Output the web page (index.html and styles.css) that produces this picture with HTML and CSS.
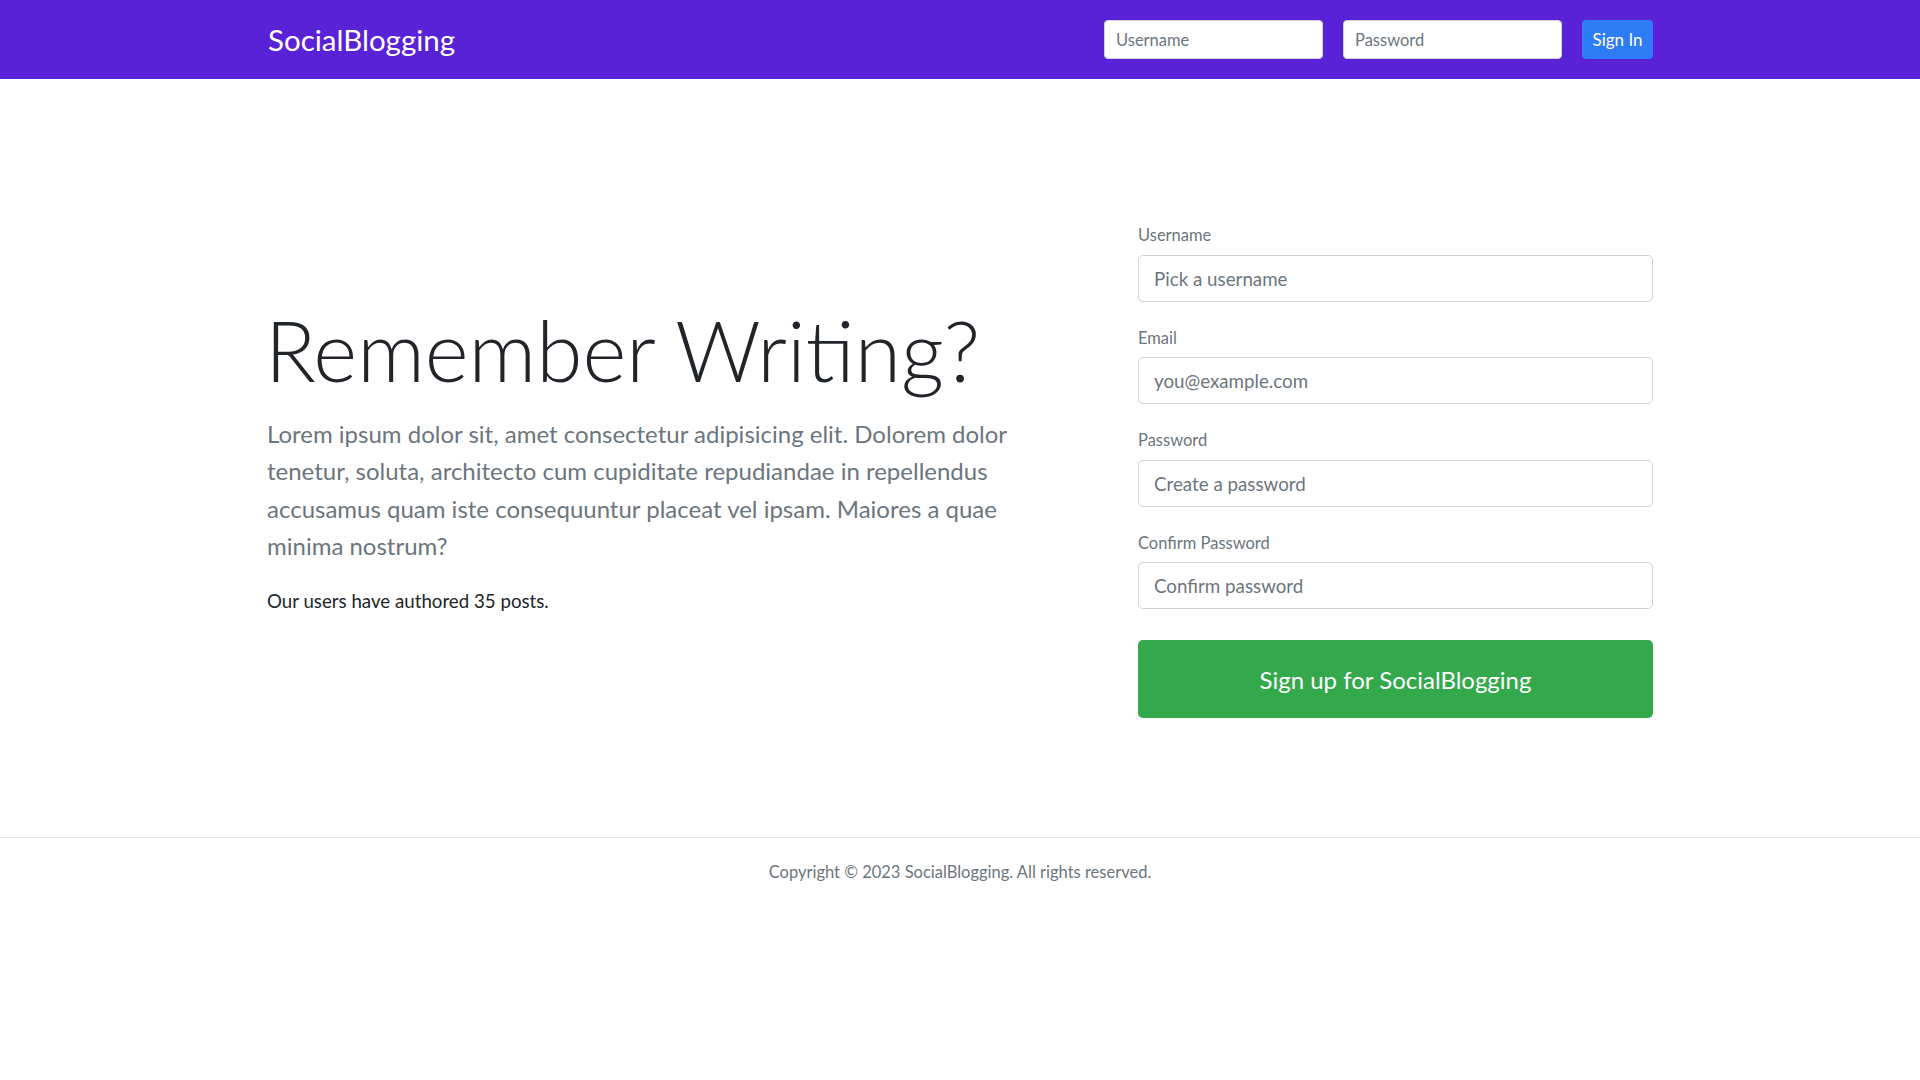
FILE: index.html
```html
<!DOCTYPE html>
<html lang="en">
<head>
<meta charset="utf-8">
<title>SocialBlogging</title>
<link rel="stylesheet" href="styles.css">
</head>
<body>
<header class="topbar">
  <div class="container topbar-inner">
    <a class="brand" href="#">SocialBlogging</a>
    <form class="signin">
      <input class="signin-input" type="text" placeholder="Username">
      <input class="signin-input" type="password" placeholder="Password">
      <button class="btn-signin" type="button">Sign In</button>
    </form>
  </div>
</header>

<main class="main">
  <div class="container hero">
    <div class="intro">
      <h1 class="display">Remember Writing?</h1>
      <p class="lead">Lorem ipsum dolor sit, amet consectetur adipisicing elit. Dolorem dolor tenetur, soluta, architecto cum cupiditate repudiandae in repellendus accusamus quam iste consequuntur placeat vel ipsam. Maiores a quae minima nostrum?</p>
      <p class="stats">Our users have authored 35 posts.</p>
    </div>
    <form class="register">
      <div class="field">
        <label class="field-label" for="u">Username</label>
        <input class="field-input" id="u" type="text" placeholder="Pick a username">
      </div>
      <div class="field">
        <label class="field-label" for="e">Email</label>
        <input class="field-input" id="e" type="text" placeholder="you@example.com">
      </div>
      <div class="field">
        <label class="field-label" for="p">Password</label>
        <input class="field-input" id="p" type="password" placeholder="Create a password">
      </div>
      <div class="field">
        <label class="field-label" for="c">Confirm Password</label>
        <input class="field-input" id="c" type="password" placeholder="Confirm password">
      </div>
      <button class="btn-signup" type="button">Sign up for SocialBlogging</button>
    </form>
  </div>
</main>

<footer class="footer">
  <p class="copyright">Copyright &copy; 2023 SocialBlogging. All rights reserved.</p>
</footer>
</body>
</html>
```

FILE: styles.css
```css
* { box-sizing: border-box; }

html, body {
  margin: 0;
  padding: 0;
}

body {
  font-family: Lato, "Noto Sans", sans-serif;
  color: #212529;
  background: #fff;
  font-size: 18.7px;
}

.container {
  width: 1386px;
  margin: 0 auto;
}

/* Top bar */
.topbar {
  background: #5a22d6;
  height: 79px;
}

.topbar-inner {
  height: 79px;
  display: flex;
  align-items: center;
  justify-content: space-between;
}

.brand {
  color: #fff;
  text-decoration: none;
  font-size: 29.5px;
  font-weight: 400;
  margin-left: 1px;
}

.signin {
  display: flex;
  gap: 20px;
  align-items: center;
}

.signin-input {
  width: 219px;
  height: 39px;
  border: 1px solid #ced4da;
  border-radius: 4px;
  padding: 0 11px;
  font-family: inherit;
  font-size: 16.5px;
  color: #495057;
  background: #fff;
  outline: none;
}

.signin-input::placeholder { color: #6c757d; }

.btn-signin {
  height: 39px;
  width: 71px;
  padding: 0;
  border: none;
  border-radius: 4px;
  background: #2e7bf6;
  color: #fff;
  font-family: inherit;
  font-size: 17px;
  font-weight: 400;
}

/* Main */
.main {
  padding: 141px 0 119px;
}

.hero {
  display: flex;
  align-items: flex-start;
  justify-content: space-between;
}

.intro {
  width: 770px;
  margin-top: 80px;
}

.display {
  margin: 0 0 0 -2px;
  font-size: 84px;
  font-weight: 300;
  line-height: 1.2;
  color: #212529;
}

.lead {
  margin: 14px 0 0;
  font-size: 24px;
  line-height: 37.5px;
  color: #6c757d;
}

.stats {
  margin: 21px 0 0;
  font-size: 18.7px;
  line-height: 30px;
  color: #212529;
}

.register {
  width: 515px;
}

.field {
  margin-bottom: 21px;
}

.field-label {
  display: block;
  font-size: 16.5px;
  line-height: 26.5px;
  padding-top: 2px;
  color: #6c757d;
  margin-bottom: 6px;
}

.field-input {
  display: block;
  width: 100%;
  height: 47px;
  border: 1px solid #ced4da;
  border-radius: 5px;
  padding: 0 15px;
  font-family: inherit;
  font-size: 18.75px;
  color: #495057;
  outline: none;
}

.field-input::placeholder { color: #6c757d; }

.btn-signup {
  display: block;
  width: 100%;
  height: 78px;
  margin-top: 31px;
  border: none;
  border-radius: 5px;
  background: #33a94c;
  color: #fff;
  font-family: inherit;
  font-size: 24px;
  font-weight: 400;
}

/* Footer */
.footer {
  border-top: 1px solid #dee2e6;
  padding: 22px 0;
}

.copyright {
  margin: 0;
  text-align: center;
  font-size: 16.5px;
  line-height: 24px;
  color: #6c757d;
}
```
